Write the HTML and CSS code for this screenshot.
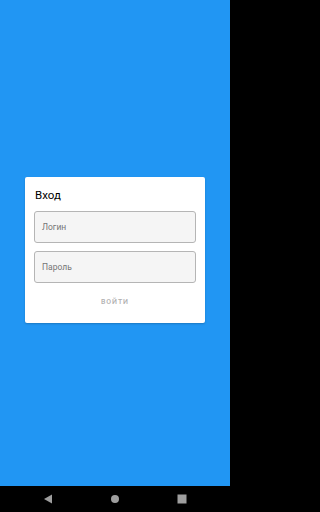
FILE: index.html
```html
<!DOCTYPE html>
<html lang="ru">
<head>
<meta charset="utf-8">
<link rel="stylesheet" href="styles.css">
</head>
<body>
<div class="screen">
  <main class="content">
    <div class="card">
      <div class="title">Вход</div>
      <div class="field"><span class="placeholder">Логин</span></div>
      <div class="field"><span class="placeholder">Пароль</span></div>
      <div class="actions"><span class="btn">ВОЙТИ</span></div>
    </div>
  </main>
  <nav class="navbar">
    <svg class="nav-icon" width="10" height="10" viewBox="0 0 10 10"><polygon points="9,0.5 9,9.5 1,5" fill="#9e9e9e"/></svg>
    <svg class="nav-icon" width="10" height="10" viewBox="0 0 10 10"><circle cx="5" cy="5" r="4" fill="#9e9e9e"/></svg>
    <svg class="nav-icon" width="10" height="10" viewBox="0 0 10 10"><rect x="0.5" y="0.5" width="9" height="9" fill="#9e9e9e"/></svg>
  </nav>
</div>
</body>
</html>
```
FILE: styles.css
```css
html, body {
  margin: 0;
  padding: 0;
  background: #000;
}
.screen {
  width: 230px;
  height: 512px;
  display: flex;
  flex-direction: column;
  font-family: Roboto, "Noto Sans", sans-serif;
  overflow: hidden;
}
.content {
  flex: 1;
  background: #2196f3;
  display: flex;
  align-items: center;
  justify-content: center;
  padding-top: 13px;
}
.card {
  width: 180px;
  box-sizing: border-box;
  background: #fff;
  border-radius: 2px;
  padding: 10px 9px 3px 9px;
  display: flex;
  flex-direction: column;
  gap: 8px;
  box-shadow: 0 1px 2px rgba(0,0,0,0.2);
}
.title {
  font-size: 11.5px;
  line-height: 16px;
  color: #000;
  padding-left: 1px;
}
.field {
  height: 32px;
  box-sizing: border-box;
  border: 1px solid #b5b5b5;
  border-radius: 3px;
  background: #f5f5f5;
  display: flex;
  align-items: center;
  padding-left: 7px;
}
.placeholder {
  font-size: 8.5px;
  color: #757575;
}
.actions {
  height: 36px;
  margin-top: -7px;
  display: flex;
  align-items: center;
  justify-content: center;
}
.btn {
  font-size: 7px;
  letter-spacing: 0.9px;
  color: #b0b0b0;
  font-weight: 500;
}
.navbar {
  height: 26px;
  background: #000;
  border-radius: 0 0 12px 12px;
  display: flex;
  align-items: center;
  justify-content: space-between;
  padding: 0 43px 0 43px;
}
.nav-icon {
  display: block;
}
```
